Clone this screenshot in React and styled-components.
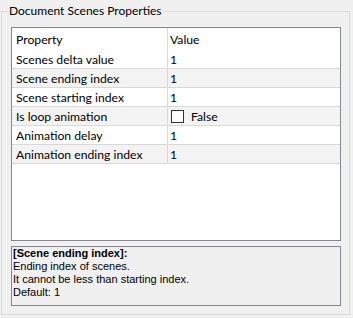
import React from "react";
import styled, { createGlobalStyle } from "styled-components";

const Global = createGlobalStyle`
  html, body { margin: 0; padding: 0; background: #f0f0f0; }
  body { width: 353px; height: 318px; overflow: hidden; }
`;

const Page = styled.div`
  padding: 0 3px 0 1px;
  width: 353px;
  height: 318px;
  box-sizing: border-box;
`;

const GroupBox = styled.fieldset`
  margin: 3px 0 0 0;
  padding: 8px 8px 8px 9px;
  border: 1px solid #dcdcdc;
  min-width: 0;
  display: flex;
  flex-direction: column;
  box-sizing: border-box;
`;

const Legend = styled.legend`
  font-family: "Lato", "Liberation Sans", sans-serif;
  font-size: 12px;
  line-height: 16px;
  color: #000;
  padding: 0 1px;
  margin-left: -3px;
`;

const Grid = styled.div`
  height: 214px;
  box-sizing: border-box;
  border: 1px solid #828790;
  background: #fff;
  font-family: "Lato", "Liberation Sans", sans-serif;
  font-size: 12.2px;
  color: #000;
`;

const Row = styled.div`
  display: grid;
  grid-template-columns: 155px 1fr;
  height: ${(p) => (p.$header ? "22px" : "19px")};
  box-sizing: border-box;
  background: ${(p) => (p.$alt ? "#f3f3f3" : "#fff")};
  border-bottom: ${(p) => (p.$header ? "none" : "1px solid #d9d9d9")};
`;

const Cell = styled.div`
  display: flex;
  align-items: center;
  gap: 7px;
  padding-left: ${(p) => (p.$value ? "2px" : "4px")};
  border-left: ${(p) => (p.$value ? "1px solid #d9d9d9" : "none")};
  white-space: nowrap;
  overflow: hidden;
`;

const Check = styled.span`
  width: 13px;
  height: 13px;
  box-sizing: border-box;
  border: 1px solid #333;
  background: #fff;
  margin-left: 1px;
  flex: none;
`;

const Help = styled.div`
  margin-top: 5px;
  height: 60px;
  box-sizing: border-box;
  border: 1px solid #828790;
  background: #f0f0f0;
  padding: 0 0 0 1px;
  font-family: "Liberation Sans", "DejaVu Sans", sans-serif;
  font-size: 11px;
  line-height: 13px;
  color: #000;
`;

const HelpTitle = styled.div`
  font-weight: bold;
`;

const rows = [
  ["Scenes delta value", "1"],
  ["Scene ending index", "1"],
  ["Scene starting index", "1"],
  ["Is loop animation", "False", true],
  ["Animation delay", "1"],
  ["Animation ending index", "1"],
];

export default function App() {
  return (
    <Page>
      <Global />
      <GroupBox>
        <Legend>Document Scenes Properties</Legend>
        <Grid>
          <Row $header>
            <Cell>Property</Cell>
            <Cell $value>Value</Cell>
          </Row>
          {rows.map(([k, v, cb], i) => (
            <Row key={k} $alt={i % 2 === 1}>
              <Cell>{k}</Cell>
              <Cell $value>
                {cb && <Check />}
                {v}
              </Cell>
            </Row>
          ))}
        </Grid>
        <Help>
          <HelpTitle>[Scene ending index]:</HelpTitle>
          <div>Ending index of scenes.</div>
          <div>It cannot be less than starting index.</div>
          <div>Default: 1</div>
        </Help>
      </GroupBox>
    </Page>
  );
}
